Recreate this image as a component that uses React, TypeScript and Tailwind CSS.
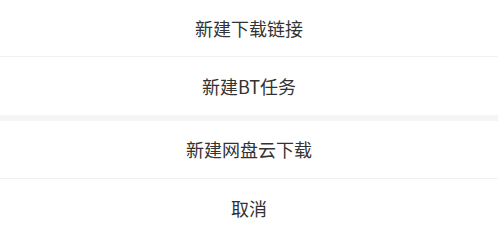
import React from "react";

const Row = ({ label, border, first }: { label: string; border?: boolean; first?: boolean }) => (
  <div
    className={`${first ? "h-[57px]" : "h-[58px]"} flex items-center justify-center bg-white text-[18px] text-[#333333] ${
      border ? "border-b border-[#f0f0f0]" : ""
    }`}
  >
    {label}
  </div>
);

export default function App() {
  return (
    <div
      className="w-[498px] h-[230px] overflow-hidden bg-white"
      style={{ fontFamily: '"Noto Sans CJK SC", "Noto Sans", sans-serif' }}
    >
      <Row label="新建下载链接" border first />
      <Row label="新建BT任务" />
      <div className="h-[6px] bg-[#f5f5f5]" />
      <Row label="新建网盘云下载" border />
      <Row label="取消" />
    </div>
  );
}
